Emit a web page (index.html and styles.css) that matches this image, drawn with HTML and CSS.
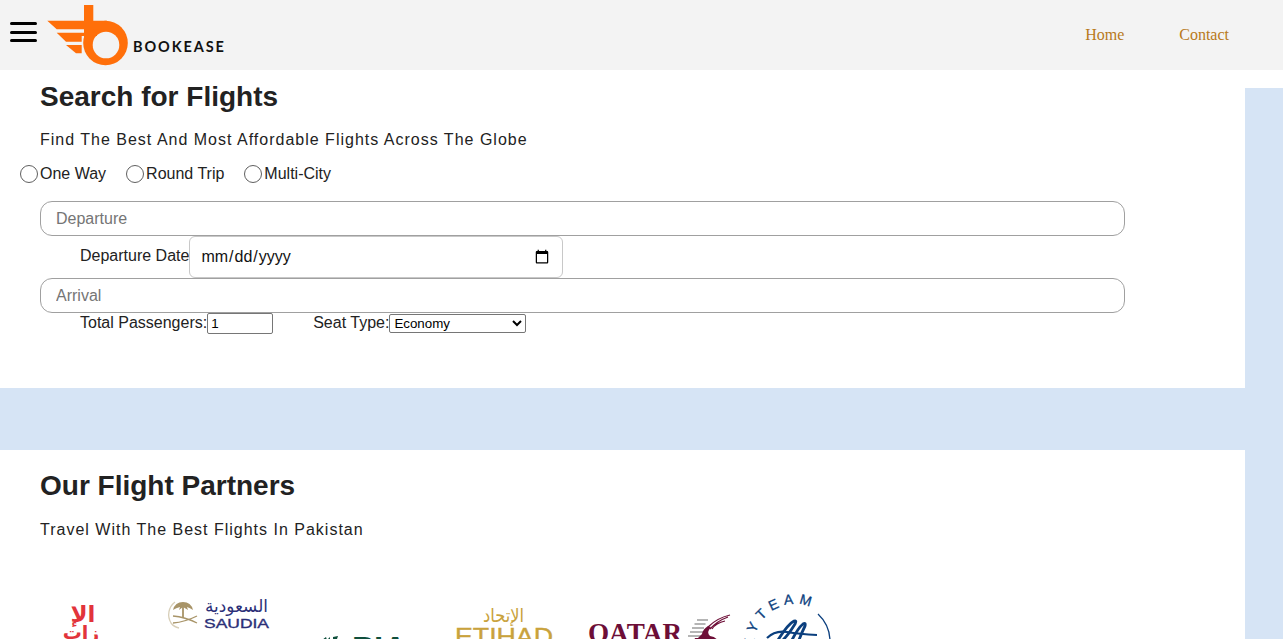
FILE: index.html
```html
<!DOCTYPE html>
<html lang="en">
<head>
<meta charset="utf-8">
<title>BookEase</title>
<link rel="stylesheet" href="styles.css">
</head>
<body>
<nav class="nav">
  <button class="burger" aria-label="Menu"><span></span><span></span><span></span></button>
  <a class="brand" href="#">
    <svg class="brand-mark" viewBox="0 0 84 62" width="84" height="62" aria-hidden="true">
      <circle cx="58.500" cy="39" r="22.300" fill="#ff6f0a"/>
      <path fill="#ff6f0a" d="M.3 16.700H37V1h9.300v15.700H60v8.600H46.300V38H37V25.300H9.700z"/>
      <circle cx="59" cy="41" r="13.300" fill="#f3f3f3"/>
      <path fill="#ff6f0a" d="M9.700 28.700H50V32H34.700V37.700H19z"/>
      <path fill="#ff6f0a" d="M19 41H34.700V49.300H29z"/>
    </svg>
    <span class="brand-name">BOOKEASE</span>
  </a>
  <div class="nav-links">
    <a href="#">Home</a>
    <a href="#">Contact</a>
  </div>
</nav>

<main class="page">
  <section class="panel search">
    <h2>Search for Flights</h2>
    <p class="sub">Find The Best And Most Affordable Flights Across The Globe</p>
    <form>
      <div class="trip">
        <label><input type="radio" name="trip">One Way</label>
        <label><input type="radio" name="trip">Round Trip</label>
        <label><input type="radio" name="trip">Multi-City</label>
      </div>
      <input class="wide" type="text" placeholder="Departure">
      <div class="row-date">
        <label for="d">Departure Date</label><input id="d" class="date" type="date">
      </div>
      <input class="wide" type="text" placeholder="Arrival">
      <div class="row-extra">
        <label for="p">Total Passengers:</label><input id="p" class="num" type="text" value="1">
        <label class="seat" for="s">Seat Type:</label><select id="s"><option>Economy</option></select>
      </div>
    </form>
  </section>

  <section class="panel partners">
    <h2>Our Flight Partners</h2>
    <p class="sub">Travel With The Best Flights In Pakistan</p>
    <div class="logos">
      <svg width="130" height="110" viewBox="0 0 130 110" aria-label="Emirates">
        <text x="63" y="32" text-anchor="middle" class="t-emirates">الإ</text>
        <text x="61" y="49" text-anchor="middle" class="t-emirates2">زات</text>
      </svg>
      <svg width="150" height="110" viewBox="0 0 150 110" aria-label="Saudia">
        <path d="M25 12a16 16 0 0 0-4 21q3 4 8 5" fill="none" stroke="#d8cfb8" stroke-width="1.300"/>
        <path d="M33 28V17" stroke="#a89468" stroke-width="1.800"/>
        <path d="M23 20q2-8 10-8t10 8q-3-2-6-3l1 3-5-3-4 3 1-3q-4 1-7 3z" fill="#a89468"/>
        <path d="M23 33q12-1 24-7M23 26q12 1 24 7" fill="none" stroke="#a89468" stroke-width="1.300"/>
        <text x="55" y="22" class="t-saudia-ar" textLength="63" lengthAdjust="spacingAndGlyphs">السعودية</text>
        <text x="54" y="38" class="t-saudia" textLength="65" lengthAdjust="spacingAndGlyphs">SAUDIA</text>
      </svg>
      <svg width="140" height="110" viewBox="0 0 140 110" aria-label="PIA">
        <path d="M22 50l4-3 1 3 3-3v6h-8zM33 47l5-1-2 6h-3z" fill="#0f4f3c"/>
        <text x="52" y="69" class="t-klm" textLength="55" lengthAdjust="spacingAndGlyphs">PIA</text>
      </svg>
      <svg width="130" height="110" viewBox="0 0 130 110" aria-label="Etihad">
        <text x="43" y="32" class="t-etihad-ar" textLength="41" lengthAdjust="spacingAndGlyphs">الإتحاد</text>
        <text x="15" y="55" class="t-etihad" textLength="98" lengthAdjust="spacingAndGlyphs">ETIHAD</text>
      </svg>
      <svg width="170" height="110" viewBox="0 0 170 110" aria-label="Qatar">
        <text x="18" y="52" class="t-qatar" textLength="94" lengthAdjust="spacingAndGlyphs">QATAR</text>
        <path d="M127 30h11M124.500 34h11M122 38h12M120 42h13M118 46h15" stroke="#b5b5b5" stroke-width="1.800"/>
        <path d="M160 25q-13 3-22 12M158 27q-11 4-18 12M155 31q-9 2-13 8" fill="none" stroke="#6d0e37" stroke-width="1.200"/>
        <path d="M138 36q-5 3-6 8l-4 4h-3l-1 3h24q-2-4-8-5-3-3-1-6l2-3z" fill="#6d0e37"/>
      </svg>
      <svg width="100" height="110" viewBox="0 0 100 110" aria-label="SkyTeam">
        <path id="skyarc" d="M19.500 75.500A41 41 0 1 1 95.400 47.900" fill="none"/>
        <text class="t-sky"><textPath href="#skyarc" startOffset="4">SKYTEAM</textPath></text>
        <path d="M78 24a38 38 0 0 1 12 26" fill="none" stroke="#0b3f7e" stroke-width="1.300"/>
        <path d="M27 48q8-8 20-6 12 2 30 3" fill="none" stroke="#0b3f7e" stroke-width="2.200"/>
        <path d="M38 50Q48 34 54 31q3-1 1 3-6 10-12 16M52 50q6-12 11-16 3-2 2 2-3 6-6 14" fill="none" stroke="#0b3f7e" stroke-width="2.800"/>
      </svg>
    </div>
  </section>
</main>
</body>
</html>
```

FILE: styles.css
```css
* { box-sizing: border-box; }
html, body { height: 639px; overflow: hidden; }
body {
  margin: 0;
  background: linear-gradient(#fff 88px, #d6e4f5 88px);
  font-family: "Liberation Sans", Arial, sans-serif;
  font-size: 16px;
  color: #222;
}
.nav {
  display: flex;
  align-items: center;
  height: 70px;
  background: #f3f3f3;
  padding-left: 10px;
}
.burger {
  display: flex;
  flex-direction: column;
  gap: 5.500px;
  width: 27px;
  margin: 0 10px 0 0;
  padding: 0;
  border: 0;
  background: none;
  transform: translateY(-3px);
}
.burger span { display: block; height: 3px; background: #000; border-radius: 2px; }
.brand {
  display: flex;
  align-items: flex-start;
  text-decoration: none;
  color: #111;
  align-self: flex-start;
  margin-top: 4px;
}
.brand-mark { display: block; flex: none; }
.brand-name {
  margin: 35px 0 0 2px;
  font-family: Lato, "Liberation Sans", sans-serif;
  font-size: 14.500px;
  font-weight: 700;
  letter-spacing: 1.900px;
  line-height: 15px;
}
.nav-links {
  display: flex;
  gap: 55px;
  margin-left: auto;
  margin-right: 54px;
  font-family: "Liberation Serif", serif;
  font-size: 16px;
}
.nav-links a { color: #b8791a; text-decoration: none; }

.page { width: 1245px; }
.panel { background: #fff; padding: 0 0 0 20px; }
.search { height: 318px; margin-bottom: 62px; }
.partners { height: 300px; }
h2 {
  margin: 0 0 0 20px;
  padding-top: 10px;
  font-size: 28px;
  line-height: 33px;
  font-weight: 700;
  color: #222;
}
.sub {
  margin: 18px 0 0 20px;
  font-size: 16px;
  line-height: 18px;
  letter-spacing: 1px;
  color: #222;
}
.trip {
  display: flex;
  gap: 20px;
  margin-top: 16px;
  height: 18px;
  line-height: 18px;
}
.trip label { display: flex; align-items: center; }
.trip input {
  appearance: none;
  width: 18px;
  height: 18px;
  margin: 0 2px 0 0;
  flex: none;
  background: #fff;
  border: 1.500px solid #5f5f5f;
  border-radius: 50%;
}
.wide {
  display: block;
  width: 1085px;
  height: 35px;
  margin-left: 20px;
  padding: 0 15px;
  border: 1px solid #a0a0a0;
  border-radius: 12px;
  font: inherit;
  background: #fff;
  color: #222;
}
.wide:first-of-type { margin-top: 18px; }
.wide::placeholder { color: #757575; opacity: 1; }
.row-date {
  display: flex;
  align-items: flex-start;
  margin-left: 60px;
  height: 42px;
}
.row-date label { line-height: 40px; }
.date {
  width: 374px;
  height: 42px;
  padding: 0 10px 0 10px;
  border: 1px solid #c8c8c8;
  border-radius: 6px;
  font: inherit;
  color: #111;
  background: #fff;
}
.row-extra {
  display: flex;
  align-items: flex-start;
  margin-left: 60px;
  line-height: 19px;
}
.num {
  width: 66px;
  height: 21px;
  padding: 1px 3px;
  border: 1px solid #767676;
  border-radius: 2px;
  font: 13.333px "Liberation Sans", Arial, sans-serif;
}
.seat { margin-left: 40px; }
select {
  width: 137px;
  height: 19px;
  margin-top: 1px;
  border: 1px solid #767676;
  border-radius: 2px;
  background: #fff;
  font: 13.333px "Liberation Sans", Arial, sans-serif;
  color: #000;
}
.partners h2 { padding-top: 19px; }
.partners .sub { margin-top: 19px; }
.logos { display: flex; margin-top: 51px; }
.logos svg { display: block; flex: none; overflow: hidden; }
.t-emirates { font: 700 23px "DejaVu Sans", sans-serif; fill: #e2343b; }
.t-emirates2 { font: 700 19px "DejaVu Sans", sans-serif; fill: #e2343b; }
.t-saudia-ar { font: 17px "DejaVu Sans", sans-serif; fill: #2b2f78; }
.t-saudia { font: 13.500px "Liberation Sans", sans-serif; fill: #2b2f78; stroke: #2b2f78; stroke-width: .35px; }
.t-klm { font: 700 32px "Liberation Sans", sans-serif; fill: #0f4f3c; }
.t-etihad-ar { font: 19px "DejaVu Sans", sans-serif; fill: #c9a23c; }
.t-etihad { font: 24px "Liberation Sans", sans-serif; fill: #c9a23c; stroke: #c9a23c; stroke-width: .4px; }
.t-qatar { font: 700 28px "Liberation Serif", serif; fill: #6d0e37; }
.t-sky { font: 14px "Liberation Sans", sans-serif; fill: #0b3f7e; stroke: #0b3f7e; stroke-width: .3px; letter-spacing: 5px; }
```
